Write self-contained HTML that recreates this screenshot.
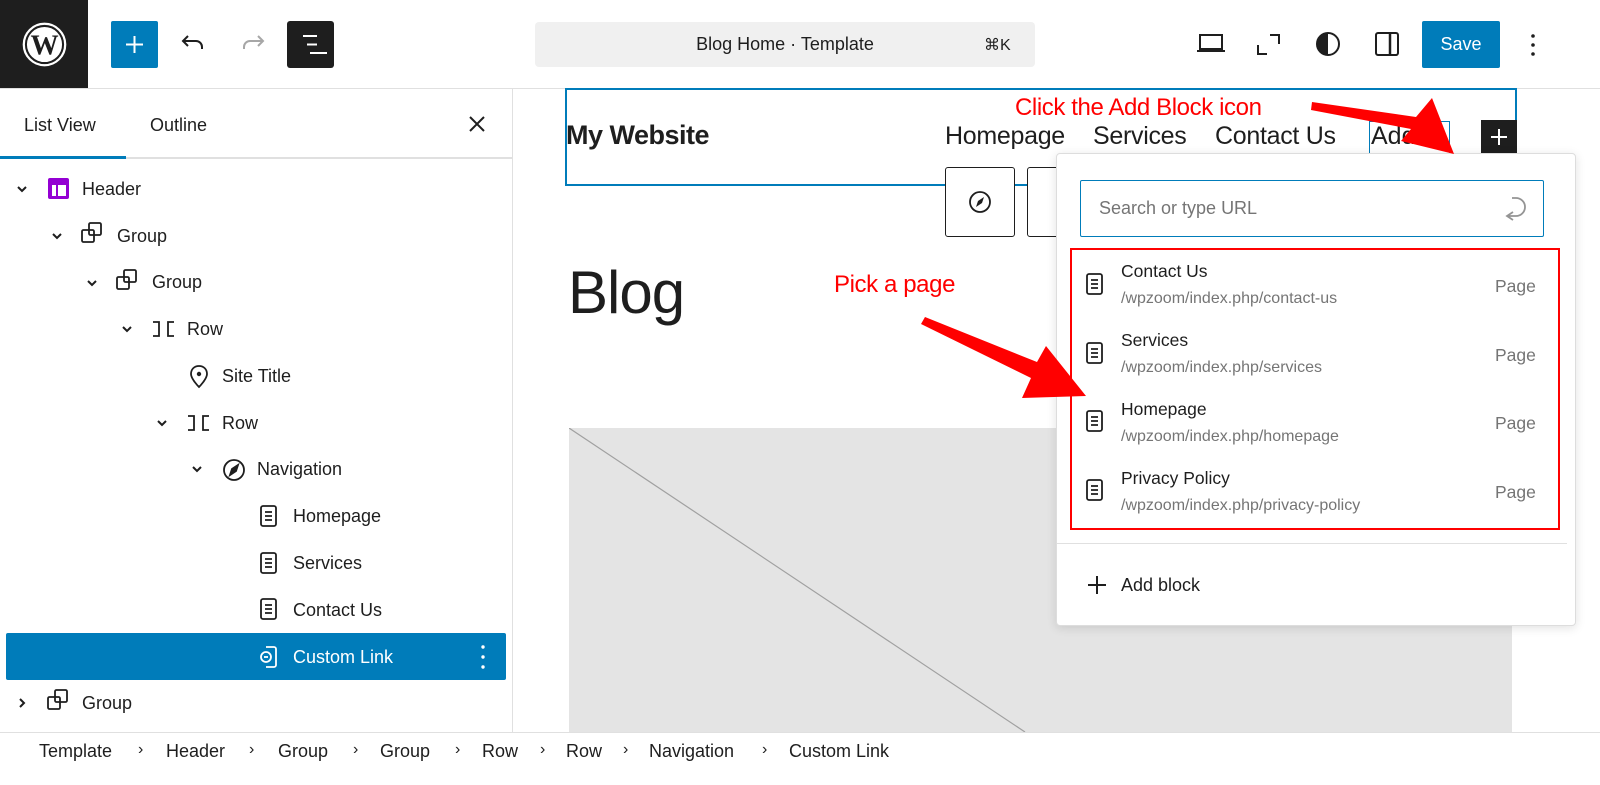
<!DOCTYPE html>
<html><head><meta charset="utf-8">
<style>
*{box-sizing:border-box;margin:0;padding:0}
body{width:1600px;height:785px;overflow:hidden;background:#fff;font-family:"Liberation Sans",sans-serif;color:#1e1e1e;position:relative}
.abs{position:absolute}
.row{position:absolute;height:46px;display:flex;align-items:center;font-size:18px;color:#1e1e1e}
.ttl{position:absolute;left:1121px;font-size:17.5px;color:#1e1e1e}
.url{position:absolute;left:1121px;font-size:16px;color:#757575}
.pg{position:absolute;left:1495px;font-size:17.5px;color:#757575}
.bc{position:absolute;top:741px;font-size:18px;color:#1e1e1e}
.bs{position:absolute;top:741px;font-size:16px;color:#1e1e1e}
</style></head><body>
<div class="abs" style="left:0;top:0;width:88px;height:88px;background:#1e1e1e"></div>
<svg class="abs" style="left:22px;top:22px" width="45" height="45" viewBox="0 0 20 20"><circle cx="10" cy="10" r="9.2" fill="none" stroke="#fff" stroke-width="1"/><circle cx="10" cy="10" r="7.8" fill="#fff"/><text x="10" y="14.4" font-family="Liberation Serif,serif" font-weight="bold" font-size="12.5" text-anchor="middle" fill="#1e1e1e">W</text></svg>
<div class="abs" style="left:0;top:88px;width:1600px;height:1px;background:#e0e0e0"></div>
<div class="abs" style="left:111px;top:21px;width:47px;height:47px;background:#007cba;border-radius:2px"></div>
<svg class="abs" style="left:122px;top:32px" width="25" height="25"><path d="M12.5 4v17M4 12.5h17" stroke="#fff" stroke-width="2"/></svg>
<svg class="abs" style="left:180px;top:32px" width="28" height="24"><path d="M8 4L3 9l5 5M3 9h13a6 6 0 0 1 6 6v2" fill="none" stroke="#1e1e1e" stroke-width="2"/></svg>
<svg class="abs" style="left:238px;top:32px" width="28" height="24"><path d="M20 4l5 5-5 5M25 9H12a6 6 0 0 0-6 6v2" fill="none" stroke="#a7a7a7" stroke-width="2"/></svg>
<div class="abs" style="left:287px;top:21px;width:47px;height:47px;background:#1e1e1e;border-radius:3px"></div>
<svg class="abs" style="left:297px;top:32px" width="30" height="25"><path d="M6 4h14M10 12.5h10M13 21h17" stroke="#fff" stroke-width="2"/></svg>
<div class="abs" style="left:535px;top:22px;width:500px;height:45px;background:#f0f0f0;border-radius:4px"></div>
<div class="abs" style="left:535px;top:34px;width:500px;text-align:center;font-size:18px">Blog Home · Template</div>
<div class="abs" style="left:984px;top:35px;font-size:16px">⌘K</div>
<svg class="abs" style="left:1196px;top:32px" width="30" height="22"><path d="M4 3h22v14H4zM1 19h28" fill="none" stroke="#1e1e1e" stroke-width="2"/></svg>
<svg class="abs" style="left:1256px;top:32px" width="26" height="24"><path d="M14 3h9v9M2 13v9h9" fill="none" stroke="#1e1e1e" stroke-width="2"/></svg>
<svg class="abs" style="left:1314px;top:31px" width="28" height="26"><circle cx="14" cy="13" r="11" fill="none" stroke="#1e1e1e" stroke-width="2"/><path d="M14 2a11 11 0 0 0 0 22z" fill="#1e1e1e"/></svg>
<svg class="abs" style="left:1374px;top:30px" width="26" height="28"><rect x="2" y="3" width="22" height="22" rx="2" fill="none" stroke="#1e1e1e" stroke-width="2"/><path d="M16 3v22" stroke="#1e1e1e" stroke-width="2.5"/></svg>
<div class="abs" style="left:1422px;top:21px;width:78px;height:47px;background:#007cba;border-radius:2px;color:#fff;font-size:18px;text-align:center;line-height:47px">Save</div>
<svg class="abs" style="left:1528px;top:32px" width="10" height="26"><circle cx="5" cy="4" r="1.8" fill="#1e1e1e"/><circle cx="5" cy="13" r="1.8" fill="#1e1e1e"/><circle cx="5" cy="22" r="1.8" fill="#1e1e1e"/></svg>

<div class="abs" style="left:512px;top:89px;width:1px;height:643px;background:#e0e0e0"></div>
<div class="abs" style="left:24px;top:115px;font-size:18px">List View</div>
<div class="abs" style="left:150px;top:115px;font-size:18px">Outline</div>
<svg class="abs" style="left:467px;top:114px" width="20" height="20"><path d="M3 3l14 14M17 3L3 17" stroke="#1e1e1e" stroke-width="2"/></svg>
<div class="abs" style="left:0;top:157px;width:512px;height:2px;background:#e0e0e0"></div>
<div class="abs" style="left:0;top:156px;width:126px;height:3px;background:#007cba"></div>

<div class="abs" style="left:6px;top:633px;width:500px;height:47px;background:#007cba;border-radius:2px"></div>

<svg class="abs" style="left:0;top:160px" width="512" height="570" fill="none" stroke="#1e1e1e" stroke-width="1.8">
<g stroke-width="2"><path d="M18 27l4 4 4-4"/><path d="M53 74l4 4 4-4"/><path d="M88 121l4 4 4-4"/><path d="M123 167l4 4 4-4"/><path d="M158 261l4 4 4-4"/><path d="M193 307l4 4 4-4"/><path d="M20 539l4 4-4 4"/></g>
<rect x="48" y="18" width="21" height="21" rx="2" fill="#9400d3" stroke="none"/><rect x="52" y="25" width="4" height="11" fill="#fff" stroke="none"/><rect x="58" y="25" width="8" height="11" fill="#fff" stroke="none"/>
<g><rect x="82" y="70" width="12" height="12" rx="1.5"/><rect x="89" y="63" width="12" height="12" rx="1.5"/></g>
<g><rect x="117" y="117" width="12" height="12" rx="1.5"/><rect x="124" y="110" width="12" height="12" rx="1.5"/></g>
<g><rect x="48" y="537" width="12" height="12" rx="1.5"/><rect x="55" y="530" width="12" height="12" rx="1.5"/></g>
<path d="M153 162h6v14h-6M174 162h-6v14h6"/>
<path d="M188 256h6v14h-6M209 256h-6v14h6"/>
<path d="M199 206c-5 0-8 3.5-8 8 0 5 8 13 8 13s8-8 8-13c0-4.5-3-8-8-8z"/><circle cx="199" cy="214" r="1.3" fill="#1e1e1e"/>
<circle cx="234" cy="310" r="10"/><path d="M238 305l-6 4-2 6 6-4z" fill="#1e1e1e"/>
<g><rect x="261" y="346" width="15" height="20" rx="2"/><path d="M265 352h7M265 356h7M265 360h7"/></g>
<g><rect x="261" y="393" width="15" height="20" rx="2"/><path d="M265 399h7M265 403h7M265 407h7"/></g>
<g><rect x="261" y="439" width="15" height="20" rx="2"/><path d="M265 445h7M265 449h7M265 453h7"/></g>
<g stroke="#fff"><path d="M266 487h8a2 2 0 0 1 2 2v16a2 2 0 0 1-2 2h-8"/><circle cx="266" cy="497" r="5"/><path d="M264 497h4"/></g>
<g fill="#fff" stroke="none"><circle cx="483" cy="487" r="1.7"/><circle cx="483" cy="497" r="1.7"/><circle cx="483" cy="507" r="1.7"/></g>
</svg>
<div class="row" style="left:82px;top:166px">Header</div>
<div class="row" style="left:117px;top:213px">Group</div>
<div class="row" style="left:152px;top:259px">Group</div>
<div class="row" style="left:187px;top:306px">Row</div>
<div class="row" style="left:222px;top:353px">Site Title</div>
<div class="row" style="left:222px;top:400px">Row</div>
<div class="row" style="left:257px;top:446px">Navigation</div>
<div class="row" style="left:293px;top:493px">Homepage</div>
<div class="row" style="left:293px;top:540px">Services</div>
<div class="row" style="left:293px;top:587px">Contact Us</div>
<div class="row" style="left:293px;top:634px;color:#fff">Custom Link</div>
<div class="row" style="left:82px;top:680px">Group</div>

<div class="abs" style="left:569px;top:428px;width:943px;height:304px;background:#e4e4e4"></div>
<svg class="abs" style="left:569px;top:428px" width="943" height="304"><path d="M0 0L456 304" stroke="#a0a0a0" stroke-width="1.2"/></svg>
<div class="abs" style="left:565px;top:88px;width:952px;height:98px;border:2px solid #007cba"></div>
<div class="abs" style="left:566px;top:120px;font-size:27px;font-weight:bold;letter-spacing:-0.5px">My Website</div>
<div class="abs" style="left:945px;top:122px;font-size:25px;letter-spacing:-0.3px">Homepage</div>
<div class="abs" style="left:1093px;top:122px;font-size:25px;letter-spacing:-0.3px">Services</div>
<div class="abs" style="left:1215px;top:122px;font-size:25px;letter-spacing:-0.3px">Contact Us</div>
<div class="abs" style="left:1369px;top:121px;width:81px;height:32px;border:1px solid #007cba;border-bottom:none;overflow:hidden;font-size:25px;padding-left:1px">Add l</div>
<div class="abs" style="left:1481px;top:120px;width:36px;height:34px;background:#1e1e1e"></div>
<svg class="abs" style="left:1489px;top:127px" width="20" height="20"><path d="M10 2v16M2 10h16" stroke="#fff" stroke-width="2"/></svg>
<div class="abs" style="left:945px;top:167px;width:70px;height:70px;border:1.5px solid #1e1e1e;border-radius:3px;background:#fff"></div>
<svg class="abs" style="left:967px;top:189px" width="26" height="26"><circle cx="13" cy="13" r="10" fill="none" stroke="#1e1e1e" stroke-width="1.8"/><path d="M17 8l-6 4-2 6 6-4z" fill="#1e1e1e"/></svg>
<div class="abs" style="left:1027px;top:167px;width:40px;height:70px;border:1.5px solid #1e1e1e;border-radius:3px;background:#fff"></div>
<div class="abs" style="left:568px;top:258px;font-size:60px;letter-spacing:-1px">Blog</div>

<div class="abs" style="left:1056px;top:153px;width:520px;height:473px;background:#fff;border:1px solid #ddd;border-radius:4px;box-shadow:0 2px 10px rgba(0,0,0,.12)"></div>
<div class="abs" style="left:1080px;top:180px;width:464px;height:57px;border:1.5px solid #007cba;border-radius:2px"></div>
<div class="abs" style="left:1099px;top:198px;font-size:18px;color:#757575">Search or type URL</div>
<svg class="abs" style="left:1500px;top:194px" width="30" height="30"><path d="M13 26l-6-4 6-4M7 22h9a9 9 0 0 0 0-18h-4" fill="none" stroke="#949494" stroke-width="1.8"/></svg>
<div class="abs" style="left:1070px;top:248px;width:490px;height:282px;border:2px solid #f00"></div>
<div class="abs" style="left:1057px;top:543px;width:510px;height:1px;background:#e0e0e0"></div>
<svg class="abs" style="left:1080px;top:260px" width="30" height="260" fill="none" stroke="#1e1e1e" stroke-width="1.8">
<g><rect x="7" y="14" width="15" height="20" rx="2"/><path d="M11 20h7M11 24h7M11 28h7"/></g>
<g><rect x="7" y="83" width="15" height="20" rx="2"/><path d="M11 89h7M11 93h7M11 97h7"/></g>
<g><rect x="7" y="151" width="15" height="20" rx="2"/><path d="M11 157h7M11 161h7M11 165h7"/></g>
<g><rect x="7" y="220" width="15" height="20" rx="2"/><path d="M11 226h7M11 230h7M11 234h7"/></g>
</svg>
<div class="ttl" style="top:261px">Contact Us</div><div class="url" style="top:290px">/wpzoom/index.php/contact-us</div><div class="pg" style="top:276px">Page</div>
<div class="ttl" style="top:330px">Services</div><div class="url" style="top:359px">/wpzoom/index.php/services</div><div class="pg" style="top:345px">Page</div>
<div class="ttl" style="top:399px">Homepage</div><div class="url" style="top:428px">/wpzoom/index.php/homepage</div><div class="pg" style="top:413px">Page</div>
<div class="ttl" style="top:468px">Privacy Policy</div><div class="url" style="top:497px">/wpzoom/index.php/privacy-policy</div><div class="pg" style="top:482px">Page</div>
<svg class="abs" style="left:1086px;top:574px" width="22" height="22"><path d="M11 2v18M2 11h18" stroke="#1e1e1e" stroke-width="2"/></svg>
<div class="abs" style="left:1121px;top:575px;font-size:18px">Add block</div>

<div class="abs" style="left:1015px;top:94px;font-size:24px;color:#f00;letter-spacing:-0.4px">Click the Add Block icon</div>
<div class="abs" style="left:834px;top:271px;font-size:24px;color:#f00;letter-spacing:-0.4px">Pick a page</div>
<svg class="abs" style="left:0;top:0" width="1600" height="785">
<polygon fill="#f00" points="1312,102 1416,117 1432,98 1454,154 1401,141 1411,129 1311,110"/>
<polygon fill="#f00" points="925,317 1037,362 1046,346 1086,396 1022,398 1031,378 921,324"/>
</svg>

<div class="abs" style="left:0;top:732px;width:1600px;height:1px;background:#e0e0e0"></div>
<div class="bc" style="left:39px">Template</div><div class="bs" style="left:138px">›</div>
<div class="bc" style="left:166px">Header</div><div class="bs" style="left:249px">›</div>
<div class="bc" style="left:278px">Group</div><div class="bs" style="left:353px">›</div>
<div class="bc" style="left:380px">Group</div><div class="bs" style="left:455px">›</div>
<div class="bc" style="left:482px">Row</div><div class="bs" style="left:540px">›</div>
<div class="bc" style="left:566px">Row</div><div class="bs" style="left:623px">›</div>
<div class="bc" style="left:649px">Navigation</div><div class="bs" style="left:762px">›</div>
<div class="bc" style="left:789px">Custom Link</div>
</body></html>
